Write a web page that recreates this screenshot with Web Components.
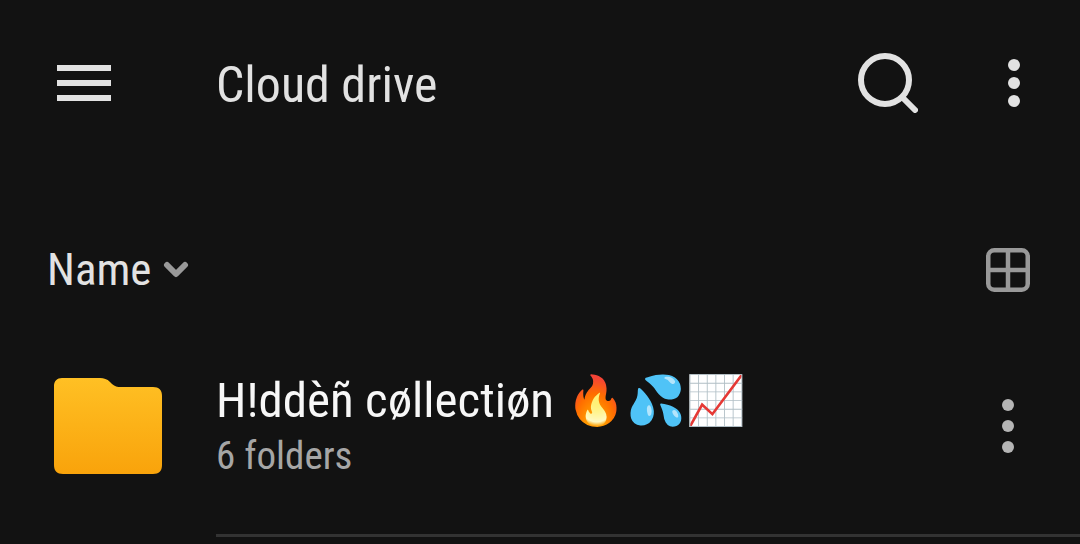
<!DOCTYPE html>
<html lang="en">
<head>
<meta charset="utf-8">
<meta name="viewport" content="width=device-width, initial-scale=1">
<title>Cloud drive</title>
<style>
  body { margin: 0; background: #121212; color: #e2e2e2; font-family: "Roboto Condensed", Roboto, sans-serif; overflow-x: hidden; }
</style>
</head>
<body>
<drive-app>
  <app-bar>Cloud drive</app-bar>
  <sort-bar>Name</sort-bar>
  <folder-item>
    <span slot="name">H!ddèñ cøllectiøn</span>
    <span slot="emoji">🔥💦📈</span>
    <span slot="info">6 folders</span>
  </folder-item>
</drive-app>
<script>
const base = `
  button { display: flex; align-items: center; margin: 0; padding: 0; border: 0; background: none; color: inherit; font: inherit; cursor: pointer; }
  svg { display: block; flex: none; }
`;

class BaseElement extends HTMLElement {
  connectedCallback() {
    if (!this.shadowRoot) {
      this.attachShadow({ mode: 'open' }).innerHTML = `<style>${base}</style>${this.constructor.markup}`;
    }
  }
}

customElements.define('drive-app', class extends BaseElement {
  static markup = `
    <style>:host { display: block; } main { display: flex; flex-direction: column; }</style>
    <main><slot></slot></main>`;
});

customElements.define('more-button', class extends BaseElement {
  static markup = `
    <style>:host { display: block; }</style>
    <button aria-label="More options">
      <svg width="12" height="54" viewBox="0 0 12 54" fill="currentColor" aria-hidden="true"></svg>
    </button>`;
  connectedCallback() {
    super.connectedCallback();
    const pitch = Number(this.getAttribute('pitch'));
    this.shadowRoot.querySelector('svg').innerHTML =
      [-pitch, 0, pitch].map(d => `<circle cx="6" cy="${27 + d}" r="6"/>`).join('');
  }
});

customElements.define('app-bar', class extends BaseElement {
  static markup = `
    <style>
      :host { display: block; }
      header { display: flex; align-items: center; height: 166px; padding: 0 60px 0 57px; }
      h1 { flex: 1; margin: 0 0 0 105px; padding-top: 4px; font-size: 50px; line-height: 56px; font-weight: 400; white-space: nowrap; }
      more-button { margin-left: 90px; }
    </style>
    <header>
      <button aria-label="Open menu">
        <svg width="54" height="36" viewBox="0 0 54 36" fill="currentColor" aria-hidden="true">
          <path d="M0 0h54v6H0zM0 15h54v6H0zM0 30h54v6H0z"/>
        </svg>
      </button>
      <h1><slot></slot></h1>
      <button aria-label="Search">
        <svg width="60" height="60" viewBox="0 0 60 60" fill="none" stroke="currentColor" stroke-width="6" stroke-linecap="round" aria-hidden="true">
          <circle cx="27" cy="27" r="24"/><path d="M45 45L57 57"/>
        </svg>
      </button>
      <more-button pitch="18"></more-button>
    </header>`;
});

customElements.define('sort-bar', class extends BaseElement {
  static markup = `
    <style>
      :host { display: block; margin-top: 74px; }
      div { display: flex; align-items: center; justify-content: space-between; height: 60px; padding: 0 50px 0 47px; }
      .sort { gap: 12px; font-size: 45px; line-height: 56px; }
      svg { color: #999; }
    </style>
    <div>
      <button class="sort">
        <slot></slot>
        <svg width="26" height="18" viewBox="0 0 26 18" fill="none" stroke="currentColor" stroke-width="6" stroke-linecap="round" stroke-linejoin="round" aria-hidden="true">
          <path d="M4 4l9 9 9-9"/>
        </svg>
      </button>
      <button aria-label="Grid view">
        <svg width="44" height="44" viewBox="0 0 44 44" fill="none" stroke="currentColor" stroke-width="4.500" aria-hidden="true">
          <rect x="2.250" y="2.250" width="39.500" height="39.500" rx="6"/><path d="M22 2v40M2 22h40"/>
        </svg>
      </button>
    </div>`;
});

customElements.define('folder-item', class extends BaseElement {
  static markup = `
    <style>
      :host { display: block; margin-top: 18px; }
      article { display: flex; align-items: center; height: 216px; padding: 0 66px 0 54px; }
      .text { flex: 1; min-width: 0; margin-left: 54px; padding-top: 4px; white-space: nowrap; }
      h2 { display: flex; align-items: baseline; gap: 12px; margin: 0; height: 56px; color: #f7f7f7; font-size: 49px; line-height: 56px; font-weight: 400; }
      slot[name="emoji"] { font-size: 48px; }
      p { margin: 0; color: #a6a6a6; font-size: 39px; line-height: 54px; }
      more-button { color: #b5b5b5; }
      hr { height: 3px; margin: 0 0 0 216px; border: 0; background: #333; }
    </style>
    <article>
      <svg width="108" height="96" viewBox="0 0 108 96" aria-hidden="true">
        <defs><linearGradient id="fill" x1="0" y1="0" x2="0" y2="1"><stop offset="0" stop-color="#ffc024"/><stop offset="1" stop-color="#f9a30b"/></linearGradient></defs>
        <path fill="url(#fill)" d="M8 0H46C50 0 53 1 56 4L58 6C61 8.500 63 9 67 9H99C105 9 108 12 108 18V87C108 93 105 96 99 96H9C3 96 0 93 0 87V8C0 3 3 0 8 0Z"/>
      </svg>
      <div class="text">
        <h2><slot name="name"></slot><slot name="emoji"></slot></h2>
        <p><slot name="info"></slot></p>
      </div>
      <more-button pitch="21"></more-button>
    </article>
    <hr>`;
});
</script>
</body>
</html>
